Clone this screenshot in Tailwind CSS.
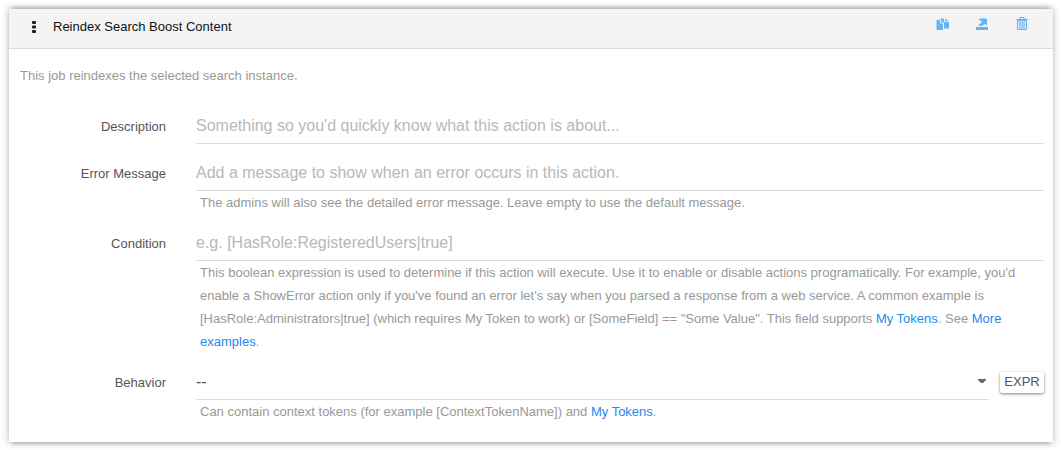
<!DOCTYPE html>
<html lang="en">
<head>
<meta charset="utf-8">
<title>Reindex Search Boost Content</title>
<script src="https://cdn.jsdelivr.net/npm/@tailwindcss/browser@4"></script>
</head>
<body class="bg-white px-2 py-2 font-['Liberation_Sans',Arial,sans-serif] text-[13px] text-[#555]">
<section class="mt-px ml-px bg-white shadow-[0_0_7px_1px_rgba(0,0,0,0.2),0_4px_5px_-3px_rgba(0,0,0,0.3),0_-4px_5px_-3px_rgba(0,0,0,0.3)]">
  <header class="flex h-10 items-center border-b border-[#dcdcdc] bg-[#f4f4f4] pr-6 pl-5">
    <button type="button" aria-label="Move action" class="flex w-6 shrink-0 text-[#222]">
      <svg class="mb-1 h-3 w-[10px]" viewBox="0 0 10 12" fill="currentColor"><rect x="3" y="0" width="4" height="3" rx="1"/><rect x="3" y="4.500" width="4" height="3" rx="1"/><rect x="3" y="9" width="4" height="3" rx="1"/></svg>
    </button>
    <h2 class="grow pb-1 text-[#111]">Reindex Search Boost Content</h2>
    <div class="flex items-center gap-[26px] pb-[9px] text-[#64b5f6]">
      <button type="button" aria-label="Copy"><svg class="h-[14px] w-[14px]" viewBox="0 0 14 14" fill="currentColor"><path d="M1.500 3H5v3.500h3V13H1.500z"/><path d="M5.500 1.500H9V5h5v6.500H9V6L5.500 3z"/><path d="M5.800 3.400L8 5.700H5.800zM10 1.500L14 4.300H10z"/></svg></button>
      <button type="button" aria-label="Export"><svg class="h-[14px] w-[14px]" viewBox="0 0 14 14" fill="currentColor"><path d="M4 1.500h8V8.500L10 7 6.500 9 3 8.500 7 5 4.500 3z"/><path d="M1 10h12v3H1z"/></svg></button>
      <button type="button" aria-label="Delete"><svg class="h-[14px] w-[14px]" viewBox="0 0 14 14" fill="none" stroke="currentColor"><path d="M2.500 3.500h9v9h-9z" fill="currentColor" fill-opacity=".25"/><path d="M1 2.500h12M5 2V.500h4V2M5 4.500v7M7 4.500v7M9 4.500v7"/></svg></button>
    </div>
  </header>
  <form class="px-[11px] pb-[19px]">
    <p class="pt-4 pb-[21px] leading-[22px] text-[#999]">This job reindexes the selected search instance.</p>
    <div class="-mr-[2px] grid grid-cols-[146px_minmax(0,1fr)] gap-x-[30px] gap-y-[11px]">
      <label for="description" class="h-9 text-right leading-[38px]">Description</label>
      <div><input id="description" type="text" placeholder="Something so you'd quickly know what this action is about..." class="block h-9 w-full border-b border-[#dcdcdc] text-base outline-none placeholder:text-[#b8b8b8]"></div>

      <label for="error" class="h-9 text-right leading-[38px]">Error Message</label>
      <div>
        <input id="error" type="text" placeholder="Add a message to show when an error occurs in this action." class="block h-9 w-full border-b border-[#dcdcdc] text-base outline-none placeholder:text-[#b8b8b8]">
        <p class="pl-1 leading-[23px] text-[#999]">The admins will also see the detailed error message. Leave empty to use the default message.</p>
      </div>

      <label for="condition" class="h-9 text-right leading-[38px]">Condition</label>
      <div>
        <input id="condition" type="text" placeholder="e.g. [HasRole:RegisteredUsers|true]" class="block h-9 w-full border-b border-[#dcdcdc] text-base outline-none placeholder:text-[#b8b8b8]">
        <p class="pl-1 leading-[23px] text-[#999]">This boolean expression is used to determine if this action will execute. Use it to enable or disable actions programatically. For example, you'd enable a ShowError action only if you've found an error let's say when you parsed a response from a web service. A common example is [HasRole:Administrators|true] (which requires My Token to work) or [SomeField] == "Some Value". This field supports <a href="#" class="text-[#1e88f0]">My Tokens</a>. See <a href="#" class="text-[#1e88f0]">More examples</a>.</p>
      </div>

      <label for="behavior" class="h-9 text-right leading-[38px]">Behavior</label>
      <div>
        <div class="flex items-center gap-[11px]">
          <div class="relative grow">
            <select id="behavior" class="block h-9 w-full appearance-none border-b border-[#dcdcdc] text-base outline-none"><option>--</option></select>
            <svg class="pointer-events-none absolute top-[15px] right-[3px] h-[5px] w-2" viewBox="0 0 8 5" fill="#666"><path d="M0 0h8v1L5 4H3L0 1z"/></svg>
          </div>
          <button type="button" class="h-[21px] w-11 rounded-xs bg-white text-center shadow-[0_1px_3px_rgba(0,0,0,0.5)]">EXPR</button>
        </div>
        <p class="pl-1 leading-[23px] text-[#999]">Can contain context tokens (for example [ContextTokenName]) and <a href="#" class="text-[#1e88f0]">My Tokens</a>.</p>
      </div>
    </div>
  </form>
</section>
</body>
</html>
